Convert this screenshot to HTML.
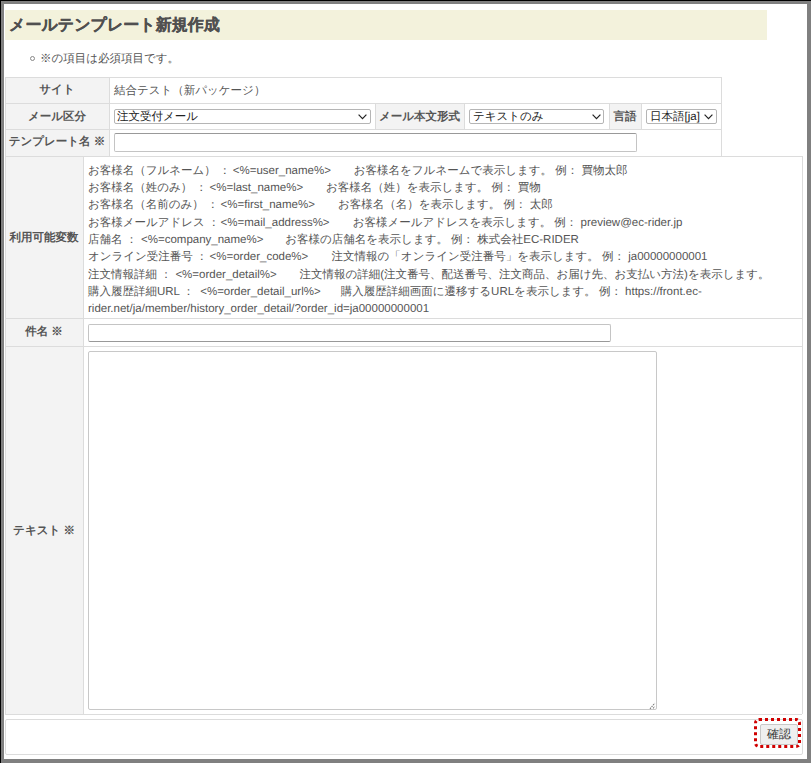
<!DOCTYPE html>
<html lang="ja">
<head>
<meta charset="utf-8">
<style>
*{box-sizing:border-box;margin:0;padding:0}
html,body{width:811px;height:763px;overflow:hidden;background:#808080}
body{position:relative;text-rendering:geometricPrecision;font-family:"Liberation Sans",sans-serif;font-size:11.5px;color:#555}
.a{position:absolute}
.blk{position:absolute;background:#000}
.page{position:absolute;left:4px;top:4px;width:803px;height:755px;background:#fff}
.hl{position:absolute;height:1px;background:#dcdcdc}
.vl{position:absolute;width:1px;background:#dcdcdc}
.th{position:absolute;background:#f3f3f3}
.lab{position:absolute;font-weight:bold;color:#555;white-space:nowrap;line-height:14px}
.t{position:absolute;white-space:pre;line-height:14px}
.sel{position:absolute;background:#fff;border:1px solid #b5b5b5;border-radius:2px;color:#222;white-space:nowrap;line-height:14px}
.v{position:absolute;left:0;top:0;height:14px;width:811px}
.v span{position:absolute;white-space:pre;line-height:14px;top:0}
.inp{position:absolute;background:#fff;border:1px solid #c4c4c4;border-radius:2px}
</style>
</head>
<body>
<div class="blk" style="left:0;top:0;width:811px;height:1px"></div>
<div class="blk" style="left:0;top:0;width:1px;height:763px"></div>
<div class="page"></div>

<!-- header -->
<div class="a" style="left:5px;top:10px;width:762px;height:30px;background:#f3f2dc"></div>
<div class="t" style="left:9px;top:17px;font-size:16px;font-weight:bold;color:#505050;line-height:17px;-webkit-text-stroke:0.25px #505050">メールテンプレート新規作成</div>
<div class="a" style="left:30px;top:56px;width:5px;height:5px;border:1px solid #888;border-radius:50%"></div>
<div class="t" style="left:40px;top:52px">※の項目は必須項目です。</div>

<!-- table 1 -->
<div class="th" style="left:5px;top:77px;width:104px;height:79px"></div>
<div class="th" style="left:375px;top:103px;width:89px;height:26px"></div>
<div class="th" style="left:609px;top:103px;width:32px;height:26px"></div>
<div class="hl" style="left:5px;top:77px;width:717px"></div>
<div class="hl" style="left:5px;top:103px;width:717px"></div>
<div class="hl" style="left:5px;top:129px;width:717px"></div>
<div class="vl" style="left:5px;top:77px;height:79px"></div>
<div class="vl" style="left:109px;top:77px;height:79px"></div>
<div class="vl" style="left:375px;top:103px;height:26px"></div>
<div class="vl" style="left:464px;top:103px;height:26px"></div>
<div class="vl" style="left:609px;top:103px;height:26px"></div>
<div class="vl" style="left:641px;top:103px;height:26px"></div>
<div class="vl" style="left:721px;top:77px;height:79px"></div>

<div class="lab" style="left:5px;width:104px;text-align:center;top:83px">サイト</div>
<div class="lab" style="left:5px;width:104px;text-align:center;top:110px">メール区分</div>
<div class="lab" style="left:5px;width:104px;text-align:center;top:135px">テンプレート名 ※</div>
<div class="lab" style="left:375px;width:89px;text-align:center;top:110px">メール本文形式</div>
<div class="lab" style="left:609px;width:32px;text-align:center;top:110px">言語</div>

<div class="t" style="left:114px;top:84px">結合テスト（新パッケージ）</div>
<div class="sel" style="left:114px;top:109px;width:257px;height:15px;padding-left:2px">注文受付メール<svg class="a" style="left:243px;top:4px" width="9" height="6" viewBox="0 0 9 6"><polyline points="0.6,0.7 4.5,4.6 8.4,0.7" fill="none" stroke="#222" stroke-width="1.2"/></svg></div>
<div class="sel" style="left:469px;top:109px;width:135px;height:15px;padding-left:3px">テキストのみ<svg class="a" style="left:122px;top:4px" width="9" height="6" viewBox="0 0 9 6"><polyline points="0.6,0.7 4.5,4.6 8.4,0.7" fill="none" stroke="#222" stroke-width="1.2"/></svg></div>
<div class="sel" style="left:646px;top:109px;width:71px;height:15px;padding-left:3px">日本語[ja]<svg class="a" style="left:57px;top:4px" width="9" height="6" viewBox="0 0 9 6"><polyline points="0.6,0.7 4.5,4.6 8.4,0.7" fill="none" stroke="#222" stroke-width="1.2"/></svg></div>
<div class="inp" style="left:114px;top:133px;width:523px;height:19px;border-top-color:#999"></div>

<!-- table 2 -->
<div class="th" style="left:5px;top:156px;width:78px;height:558px"></div>
<div class="hl" style="left:5px;top:156px;width:797px"></div>
<div class="hl" style="left:5px;top:318px;width:797px"></div>
<div class="hl" style="left:5px;top:346px;width:797px"></div>
<div class="hl" style="left:5px;top:714px;width:797px"></div>
<div class="vl" style="left:5px;top:156px;height:558px"></div>
<div class="vl" style="left:83px;top:156px;height:558px"></div>
<div class="vl" style="left:802px;top:156px;height:558px"></div>

<div class="lab" style="left:5px;width:78px;text-align:center;top:231px">利用可能変数</div>
<div class="lab" style="left:5px;width:78px;text-align:center;top:325px">件名 ※</div>
<div class="lab" style="left:5px;width:78px;text-align:center;top:524px">テキスト ※</div>

<!-- vars -->
<div class="v" style="top:163.5px"><span style="left:88px">お客様名（フルネーム） ：</span><span style="left:232.8px">&lt;%=user_name%&gt;</span><span style="left:353.8px">お客様名をフルネームで表示します。 例： 買物太郎</span></div>
<div class="v" style="top:180.85px"><span style="left:88px">お客様名（姓のみ） ：</span><span style="left:209.5px">&lt;%=last_name%&gt;</span><span style="left:326px">お客様名（姓）を表示します。 例： 買物</span></div>
<div class="v" style="top:198.2px"><span style="left:88px">お客様名（名前のみ） ：</span><span style="left:220.6px">&lt;%=first_name%&gt;</span><span style="left:337.9px">お客様名（名）を表示します。 例： 太郎</span></div>
<div class="v" style="top:215.55px"><span style="left:88px">お客様メールアドレス ：</span><span style="left:220.6px">&lt;%=mail_address%&gt;</span><span style="left:352.7px">お客様メールアドレスを表示します。 例： preview@ec-rider.jp</span></div>
<div class="v" style="top:232.9px"><span style="left:88px">店舗名 ：</span><span style="left:141px">&lt;%=company_name%&gt;</span><span style="left:285.3px">お客様の店舗名を表示します。 例： 株式会社EC-RIDER</span></div>
<div class="v" style="top:250.25px"><span style="left:88px">オンライン受注番号 ：</span><span style="left:209.5px">&lt;%=order_code%&gt;</span><span style="left:331.6px">注文情報の「オンライン受注番号」を表示します。 例： ja00000000001</span></div>
<div class="v" style="top:267.6px"><span style="left:88px">注文情報詳細 ：</span><span style="left:175.4px">&lt;%=order_detail%&gt;</span><span style="left:299.4px">注文情報の詳細(注文番号、配送番号、注文商品、お届け先、お支払い方法)を表示します。</span></div>
<div class="v" style="top:284.95px"><span style="left:88px">購入履歴詳細URL ：</span><span style="left:200.2px">&lt;%=order_detail_url%&gt;</span><span style="left:340.8px">購入履歴詳細画面に遷移するURLを表示します。 例： https://front.ec-</span></div>
<div class="v" style="top:302.3px"><span style="left:88px">rider.net/ja/member/history_order_detail/?order_id=ja00000000001</span></div>
<div class="inp" style="left:88px;top:324px;width:523px;height:18px;border-bottom-color:#999"></div>
<div class="inp" style="left:88px;top:351px;width:569px;height:359px;border-color:#c8c8c8"><svg class="a" style="left:559px;top:349px" width="8" height="9" viewBox="0 0 8 9"><line x1="2" y1="7.8" x2="6.8" y2="2.2" stroke="#7a7a7a" stroke-width="1.1" stroke-dasharray="1.5 0.9"/><line x1="5.1" y1="7.4" x2="6.8" y2="5.4" stroke="#7a7a7a" stroke-width="1.1" stroke-dasharray="1.5 0.9"/></svg></div>

<!-- button container -->
<div class="a" style="left:5px;top:719px;width:798px;height:36px;border:1px solid #dcdcdc;border-radius:2px"></div>
<div class="a" style="left:760px;top:724px;width:38px;height:21px;background:#efefef;border:1px solid #c8c8c8;border-radius:2px"></div>
<div class="t" style="left:767px;top:727px;color:#333;font-size:12px">確認</div>
<div class="a" style="left:754px;top:718px;width:47px;height:30px;border:3px dotted #d00000;border-radius:5px"></div>
</body>
</html>
